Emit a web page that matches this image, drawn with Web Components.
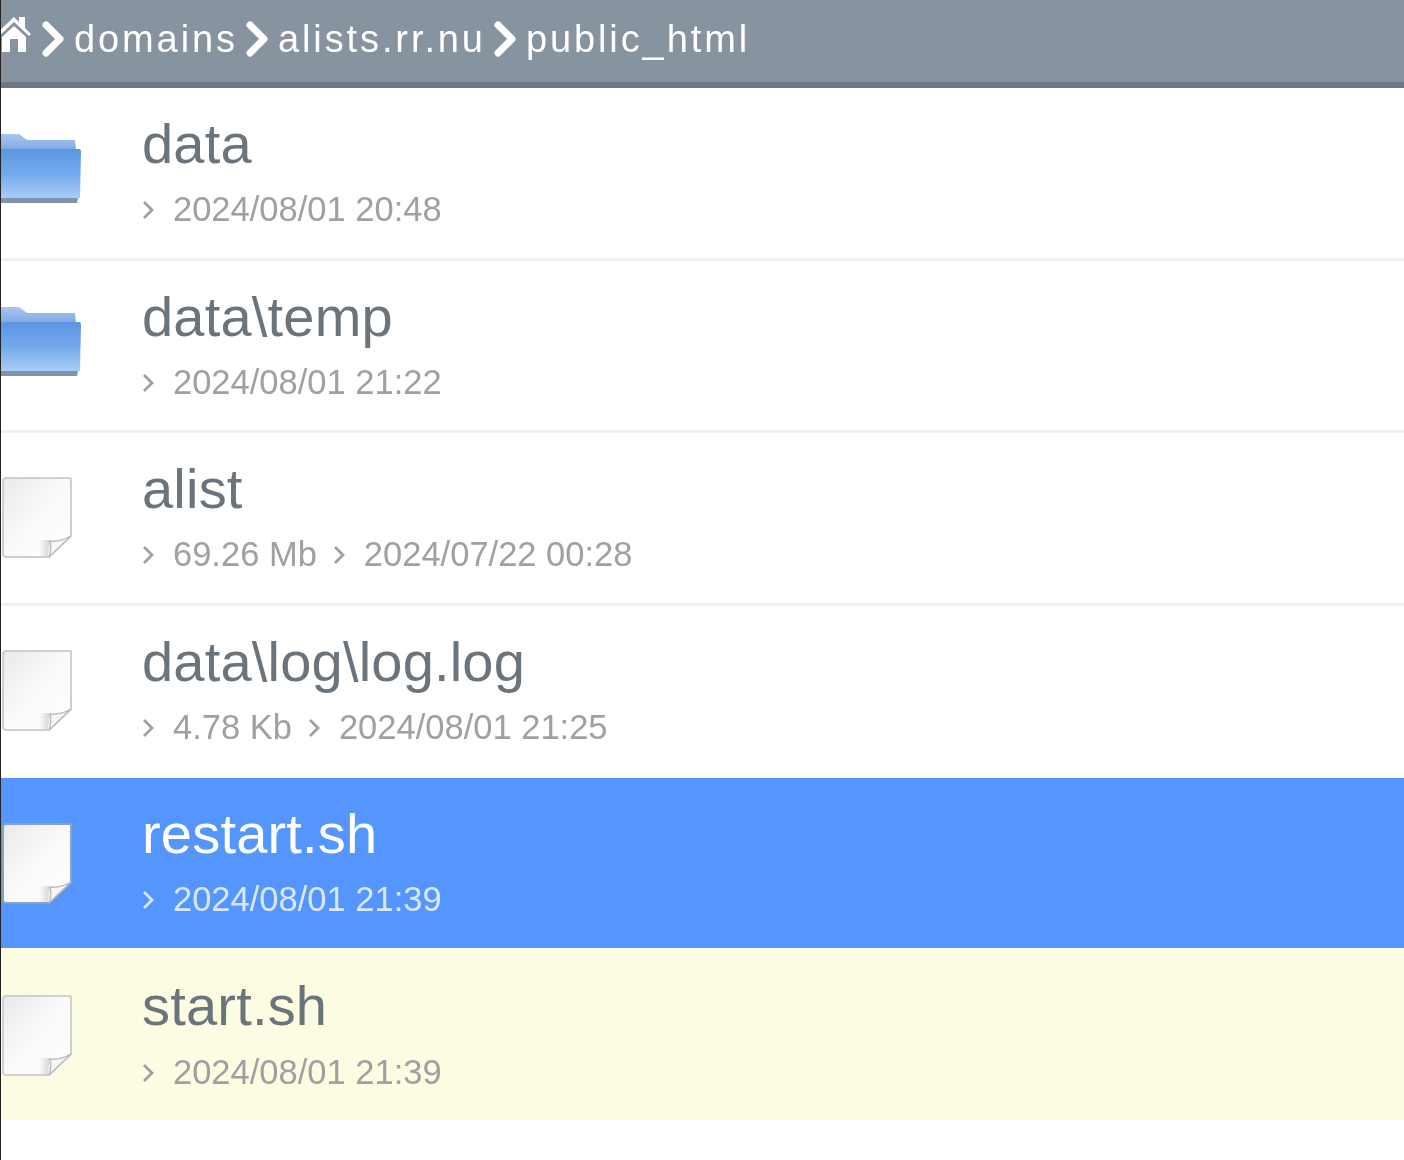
<!DOCTYPE html>
<html>
<head>
<meta charset="utf-8">
<style>
    html, body { margin: 0; padding: 0; background: #fff; }
    body { font-family: "Liberation Sans", Arial, sans-serif; overflow: hidden; }
</style>
</head>
<body>
<file-manager>
    <crumb-bar>
        <crumb-item>domains</crumb-item>
        <crumb-item>alists.rr.nu</crumb-item>
        <crumb-item>public_html</crumb-item>
    </crumb-bar>
    <file-row type="folder">data<meta-item slot="meta">2024/08/01 20:48</meta-item></file-row>
    <file-row type="folder">data\temp<meta-item slot="meta">2024/08/01 21:22</meta-item></file-row>
    <file-row type="file">alist<meta-item slot="meta">69.26 Mb</meta-item><meta-item slot="meta">2024/07/22 00:28</meta-item></file-row>
    <file-row type="file" plain>data\log\log.log<meta-item slot="meta">4.78 Kb</meta-item><meta-item slot="meta">2024/08/01 21:25</meta-item></file-row>
    <file-row type="file" state="selected">restart.sh<meta-item slot="meta">2024/08/01 21:39</meta-item></file-row>
    <file-row type="file" state="marked">start.sh<meta-item slot="meta">2024/08/01 21:39</meta-item></file-row>
</file-manager>

<script>
class FileManager extends HTMLElement {
    constructor() {
        super();
        this.attachShadow({ mode: "open" });
        this.shadowRoot.innerHTML = `
            <style>
                :host {
                    display: block;
                    height: 1160px;
                    border-left: 1px solid #222;
                    box-sizing: border-box;
                    background: #fff;
                }
                .soft { filter: blur(0.7px); }
            </style>
            <div class="soft"><slot></slot></div>
        `;
    }
}

class CrumbBar extends HTMLElement {
    constructor() {
        super();
        this.attachShadow({ mode: "open" });
        this.shadowRoot.innerHTML = `
            <style>
                :host {
                    display: flex;
                    align-items: center;
                    height: 78px;
                    padding-bottom: 4px;
                    background: #87949f;
                    border-bottom: 6px solid #6c7984;
                    color: #fff;
                    overflow: hidden;
                }
                svg { display: block; width: 30px; height: 36px; flex: none; margin: -8px 3px 0 0; overflow: visible; }
            </style>
            <svg viewBox="0 0 30 36">
                <path d="M-3 15 L13 0 L18 5 L18 0 L24 0 L24 11 L30 17 L28 19 L13 5 L-3 20 Z" fill="#fff"/>
                <path d="M1 20 L13 9 L25 20 L25 35 L17 35 L17 22 L9 22 L9 35 L1 35 Z" fill="#fff"/>
            </svg>
            <slot></slot>
        `;
    }
}

class CrumbItem extends HTMLElement {
    constructor() {
        super();
        this.attachShadow({ mode: "open" });
        this.shadowRoot.innerHTML = `
            <style>
                :host {
                    display: flex;
                    align-items: center;
                    font-size: 38px;
                    letter-spacing: 2.9px;
                    line-height: 44px;
                    white-space: nowrap;
                }
                svg { display: block; width: 24px; height: 36px; margin: 0 9px 0 7px; flex: none; }
            </style>
            <svg viewBox="0 0 24 36">
                <path d="M5 4 L19 18 L5 32" fill="none" stroke="#fff" stroke-width="7" stroke-linecap="round" stroke-linejoin="round"/>
            </svg>
            <slot></slot>
        `;
    }
}

class FileRow extends HTMLElement {
    constructor() {
        super();
        this.attachShadow({ mode: "open" });
        const id = this.getAttribute('state') || 'normal';
        const selected = id === 'selected';
        const folder = `
            <svg class="icon folder" width="80" height="72" viewBox="0 0 80 72">
                <defs>
                    <linearGradient id="back" x1="0" y1="0" x2="0" y2="1">
                        <stop offset="0" stop-color="#a9c6ee"/>
                        <stop offset="1" stop-color="#7fa9e2"/>
                    </linearGradient>
                    <linearGradient id="front" x1="0" y1="0" x2="0" y2="1">
                        <stop offset="0" stop-color="#5c95e2"/>
                        <stop offset="0.5" stop-color="#73a8ec"/>
                        <stop offset="1" stop-color="#a9cdf7"/>
                    </linearGradient>
                </defs>
                <path d="M0 1 L18 1 L26 7 L74 7 L75 17 L0 17 Z" fill="url(#back)"/>
                <path d="M0 16 L79 16 L80 18 L79 65 L0 65 Z" fill="url(#front)"/>
                <path d="M0 65 L77 65 L76 70 L0 70 Z" fill="#7f93ae"/>
            </svg>`;
        const file = `
            <svg class="icon file" width="72" height="84" viewBox="0 0 72 84">
                <defs>
                    <linearGradient id="sheet-${id}" x1="0" y1="0" x2="1" y2="1">
                        <stop offset="0" stop-color="#e9e9e9"/>
                        <stop offset="0.5" stop-color="#fafafa"/>
                        <stop offset="1" stop-color="#ffffff"/>
                    </linearGradient>
                    <linearGradient id="curl-${id}" x1="0" y1="0" x2="1" y2="0">
                        <stop offset="0" stop-color="#d8d8d8" stop-opacity="0"/>
                        <stop offset="1" stop-color="#d2d2d2"/>
                    </linearGradient>
                </defs>
                <path d="M4 2 L69 2 L70 3 L70 60 L48 81 L4 81 L2 79 L2 4 Z" fill="url(#sheet-${id})" stroke="${selected ? '#8ba2c6' : '#d0d0d0'}" stroke-width="2"/>
                <path d="M38 64 L49 64 L47 80 L38 80 Z" fill="url(#curl-${id})"/>
                <path d="M70 60 L48 81 C50 75 50 69 49 65 C56 66 63 64 70 60 Z" fill="#f6f6f6" stroke="#bcbcbc" stroke-width="1.4"/>
            </svg>`;
        this.shadowRoot.innerHTML = `
            <style>
                :host {
                    display: grid;
                    grid-template-columns: 141px 1fr;
                    height: 172.5px;
                    box-sizing: border-box;
                    border-bottom: 3px solid #f1f1f1;
                    background: #fff;
                    color: #6b747b;
                }
                :host([plain]) { border-bottom: none; }
                :host([state="selected"]) {
                    height: 170px;
                    background: #5596fe;
                    color: #fff;
                    border-bottom: none;
                    --meta-color: #d9e8ff;
                    --chev-color: #d9e8ff;
                }
                :host([state="marked"]) {
                    height: 172px;
                    background: #fcfce3;
                    border-bottom: none;
                }
                .cell { display: flex; align-items: flex-start; padding-top: 45px; }
                :host([type="file"]) .cell { padding-top: 43px; }
                :host([state="selected"]) .cell { padding-top: 44px; }
                :host([state="marked"]) .cell { padding-top: 46px; }
                .icon { display: block; flex: none; }
                .body { display: flex; flex-direction: column; padding-top: 24px; min-width: 0; }
                :host([state="marked"]) .body { padding-top: 26px; }
                .name { font-size: 56px; line-height: 64px; letter-spacing: 0.2px; white-space: nowrap; }
                .meta { display: flex; margin-top: 13px; }
                :host([state="marked"]) .meta { margin-top: 14px; }
            </style>
            <div class="cell">${this.getAttribute('type') === 'folder' ? folder : file}</div>
            <div class="body">
                <div class="name"><slot></slot></div>
                <div class="meta"><slot name="meta"></slot></div>
            </div>
        `;
    }
}

class MetaItem extends HTMLElement {
    constructor() {
        super();
        this.attachShadow({ mode: "open" });
        this.shadowRoot.innerHTML = `
            <style>
                :host {
                    display: inline-flex;
                    align-items: center;
                    font-size: 34.5px;
                    line-height: 40px;
                    color: var(--meta-color, #a0a0a0);
                    white-space: nowrap;
                    margin-right: 16px;
                }
                svg { display: block; width: 12px; height: 22px; margin-right: 19px; flex: none; margin-top: 2px; }
            </style>
            <svg viewBox="0 0 12 22">
                <path d="M2 3 L10 11 L2 19" fill="none" stroke="var(--chev-color, #a0a0a0)" stroke-width="2.8"/>
            </svg>
            <slot></slot>
        `;
    }
}

customElements.define('file-manager', FileManager);
customElements.define('crumb-bar', CrumbBar);
customElements.define('crumb-item', CrumbItem);
customElements.define('file-row', FileRow);
customElements.define('meta-item', MetaItem);
</script>
</body>
</html>
